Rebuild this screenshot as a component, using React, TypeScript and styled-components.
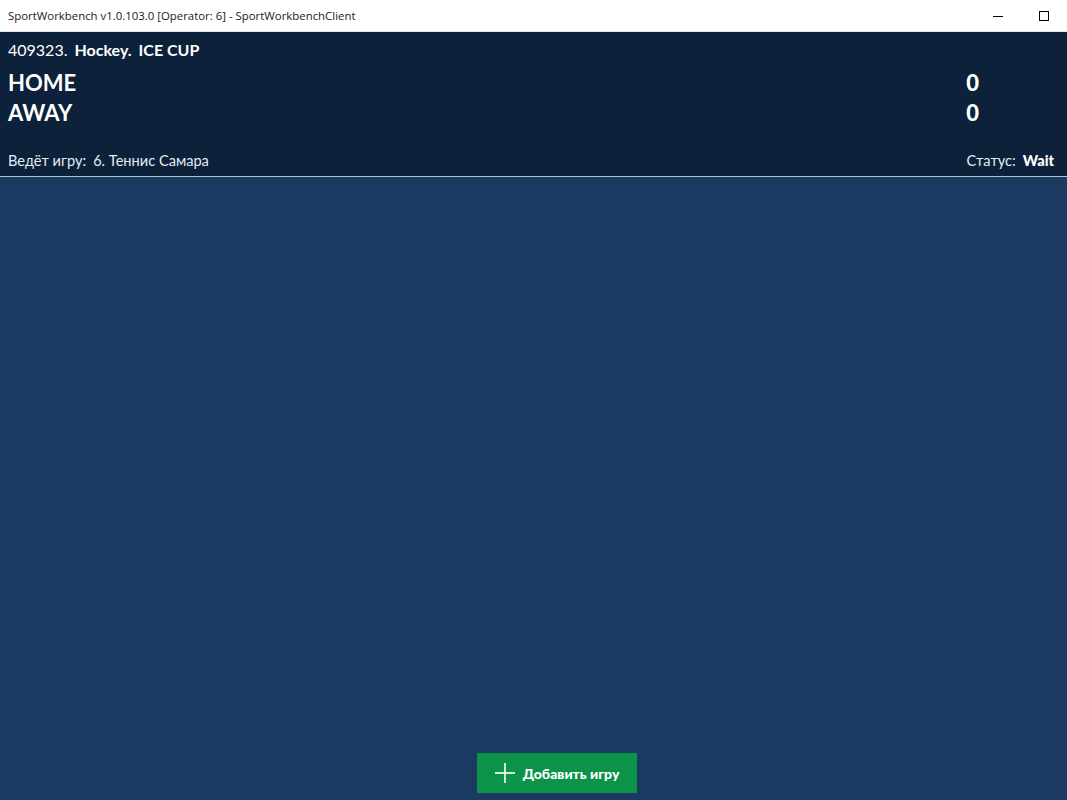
import React from "react";
import styled, { createGlobalStyle } from "styled-components";

const Global = createGlobalStyle`
  html, body { margin: 0; padding: 0; height: 100%; }
  body { font-family: Lato, "Noto Sans", sans-serif; overflow: hidden; }
  #root { height: 100%; }
`;

const Window = styled.div`
  width: 1067px;
  height: 800px;
  display: flex;
  flex-direction: column;
  background: #1b3a61;
`;

const TitleBar = styled.div`
  height: 31px;
  flex: none;
  background: #ffffff;
  display: flex;
  align-items: center;
  justify-content: space-between;
  padding-left: 8px;
  border-bottom: 1px solid #e4e6ea;
`;

const TitleText = styled.span`
  font-family: "Open Sans", "Noto Sans", sans-serif;
  font-size: 11.4px;
  color: #1a1a1a;
`;

const WinButtons = styled.div`
  display: flex;
  height: 100%;
`;

const WinButton = styled.div`
  width: 46px;
  height: 100%;
  display: flex;
  align-items: center;
  justify-content: center;
`;

const Header = styled.header`
  flex: none;
  height: 145px;
  box-sizing: border-box;
  background: #0d213b;
  border-bottom: 1px solid #b9c3cf;
  padding: 8px 13px 0 8px;
  display: flex;
  flex-direction: column;
  color: #ffffff;
`;

const EventLine = styled.div`
  font-size: 16px;
  line-height: 20px;
  display: flex;
  gap: 7px;
  margin-bottom: 7px;
`;

const Bold = styled.span`
  font-weight: 700;
`;

const TeamRow = styled.div`
  display: flex;
  justify-content: space-between;
  align-items: center;
  height: 30px;
  font-size: 22px;
  font-weight: 700;
  padding-right: 74px;
`;

const Score = styled.span`
  font-size: 22px;
  font-weight: 900;
  letter-spacing: 1px;
`;

const InfoRow = styled.div`
  margin-top: auto;
  height: 32px;
  display: flex;
  justify-content: space-between;
  align-items: center;
  font-size: 14.6px;
`;

const Info = styled.div`
  display: flex;
  gap: 7px;
  color: #e6ebf2;
`;

const Strong = styled.span`
  font-weight: 900;
  color: #ffffff;
`;

const Body = styled.main`
  flex: 1;
  display: flex;
  flex-direction: column;
  justify-content: flex-end;
  align-items: center;
  padding: 0 0 7px 46px;
`;

const AddButton = styled.button`
  width: 160px;
  height: 40px;
  border: none;
  background: #0b9449;
  color: #ffffff;
  display: flex;
  align-items: center;
  justify-content: center;
  gap: 7px;
  font-family: Lato, "Noto Sans", sans-serif;
  font-size: 14px;
  font-weight: 900;
  padding: 0;
  cursor: pointer;
`;

export default function App() {
  return (
    <>
      <Global />
      <Window>
        <TitleBar>
          <TitleText>SportWorkbench v1.0.103.0 [Operator: 6] - SportWorkbenchClient</TitleText>
          <WinButtons>
            <WinButton>
              <svg width="10" height="10" viewBox="0 0 10 10">
                <line x1="0" y1="5.5" x2="10" y2="5.5" stroke="#000" strokeWidth="1" />
              </svg>
            </WinButton>
            <WinButton>
              <svg width="10" height="10" viewBox="0 0 10 10">
                <rect x="0.5" y="0.5" width="9" height="9" fill="none" stroke="#000" strokeWidth="1" />
              </svg>
            </WinButton>
          </WinButtons>
        </TitleBar>
        <Header>
          <EventLine>
            <span>409323.</span>
            <Bold>Hockey.</Bold>
            <Bold>ICE CUP</Bold>
          </EventLine>
          <TeamRow>
            <span>HOME</span>
            <Score>0</Score>
          </TeamRow>
          <TeamRow>
            <span>AWAY</span>
            <Score>0</Score>
          </TeamRow>
          <InfoRow>
            <Info>
              <span>Ведёт игру:</span>
              <span>6. Теннис Самара</span>
            </Info>
            <Info>
              <span>Статус:</span>
              <Strong>Wait</Strong>
            </Info>
          </InfoRow>
        </Header>
        <Body>
          <AddButton>
            <svg width="22" height="22" viewBox="0 0 22 22">
              <line x1="11" y1="1" x2="11" y2="21" stroke="#fff" strokeWidth="1.6" />
              <line x1="1" y1="11" x2="21" y2="11" stroke="#fff" strokeWidth="1.6" />
            </svg>
            <span>Добавить игру</span>
          </AddButton>
        </Body>
      </Window>
    </>
  );
}
